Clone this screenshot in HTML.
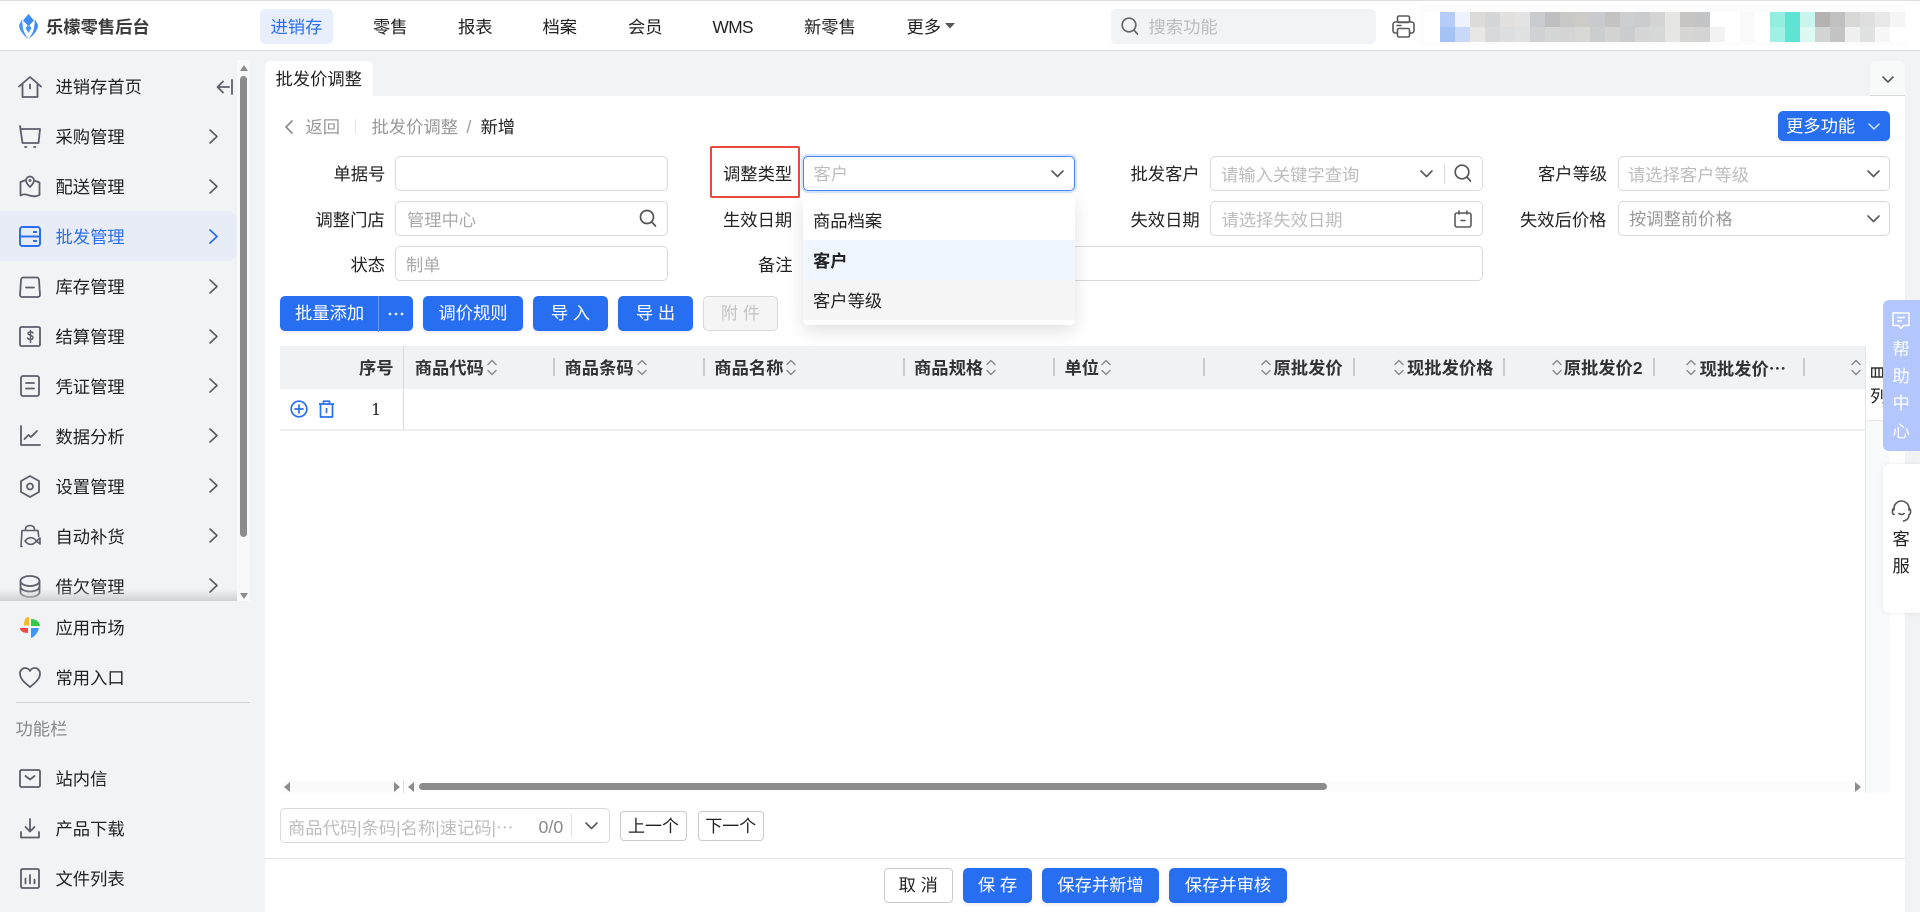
<!DOCTYPE html>
<html lang="zh-CN"><head><meta charset="utf-8"><title>批发价调整</title>
<style>
*{box-sizing:border-box}
html,body{margin:0;padding:0;width:1920px;height:912px;overflow:hidden;background:#f2f3f5}
body{position:relative;font-family:"Liberation Sans","Noto Sans CJK SC",sans-serif;font-size:17.3px;color:#222}
.a{position:absolute}
.t{position:absolute;white-space:nowrap;line-height:24px;font-size:17.3px;color:#222}
.g{color:#bdbdbd}.m{color:#999}.b{font-weight:700}.w{color:#fff}.bl{color:#2a6ff0}
.e{font-family:"Noto Sans CJK SC",sans-serif}
.i{position:absolute;border:1px solid #d9d9d9;border-radius:5px;height:35px;background:#fff}
.btn{position:absolute;background:#276ef1;border-radius:5px;color:#fff;text-align:center;height:35px;line-height:34px;font-size:17.3px;box-shadow:0 2px 3px rgba(0,0,0,.08);white-space:nowrap}
svg{position:absolute;overflow:visible;fill:none}
.s{stroke:#5c5e6a;stroke-width:1.8;stroke-linecap:round;stroke-linejoin:round}
.c{stroke:#5a5a5a;stroke-width:1.6;stroke-linecap:round;stroke-linejoin:round}
.sort{stroke:#8c8c8c;stroke-width:1.5;stroke-linecap:round;stroke-linejoin:round}
.dv{position:absolute;top:358px;width:1.5px;height:18px;background:#c9cbcf}
.mo{position:absolute;display:flex;height:15px}
.mo i{display:block;width:15px;height:15px}
</style></head><body>

<!-- header -->
<div class="a" style="left:0;top:0;width:1920px;height:51px;background:#fff;border-top:1px solid #e0e0e0;border-bottom:1.5px solid #dcdcdc"></div>
<svg style="left:19px;top:14px" width="19" height="25" viewBox="0 0 19 25"><path d="M9.500 0 15 6.500 9.500 12.500 4 6.500Z" fill="#3f8cf5"/><path d="M3 5.500 0 11c0 5 4 10 9.500 14-3-4-5-7.500-5.500-11z" fill="#4a96f7"/><path d="M16 5.500 19 11c0 5-4 10-9.500 14 3-4 5-7.500 5.500-11z" fill="#3f8cf5"/><path d="M9.500 12.500 13 8.500 15 11.500 9.500 20 4 11.500 6 8.500Z" fill="#fff"/><path d="M9.500 10.500 12.500 14 9.500 19 6.500 14Z" fill="#4a96f7"/></svg>
<div class="t b" style="left:46px;top:15px;color:#3a3a3a">乐檬零售后台</div>
<div class="a" style="left:260px;top:9px;width:73px;height:35px;background:#e8eefc;border-radius:5px"></div>
<div class="t bl" style="left:270.500px;top:15px">进销存</div>
<div class="t" style="left:373px;top:15px">零售</div>
<div class="t" style="left:458px;top:15px">报表</div>
<div class="t" style="left:542.500px;top:15px">档案</div>
<div class="t" style="left:628px;top:15px">会员</div>
<div class="t" style="left:712.500px;top:15px;letter-spacing:-.6px">WMS</div>
<div class="t" style="left:804px;top:15px">新零售</div>
<div class="t" style="left:906.500px;top:15px">更多</div>
<svg style="left:945px;top:23px" width="10" height="6"><path d="M0 0H10L5 5.500Z" fill="#555"/></svg>
<div class="a" style="left:1110.500px;top:9px;width:265.500px;height:35px;background:#f2f3f5;border-radius:5px"></div>
<svg style="left:1121px;top:17px" width="18" height="19" viewBox="0 0 18 19"><circle cx="8" cy="8" r="6.800" stroke="#666" stroke-width="1.700"/><path d="M13 13.200 16.500 17" stroke="#666" stroke-width="1.700" stroke-linecap="round"/></svg>
<div class="t" style="left:1148.500px;top:15px;color:#bdbdbd">搜索功能</div>
<svg style="left:1392px;top:15px" width="23" height="23" viewBox="0 0 23 23" class="c"><rect x="5.500" y="1" width="12" height="6.500" rx="1.500"/><rect x="1" y="7" width="21" height="11" rx="2.500"/><rect x="5.500" y="13.500" width="12" height="8.500" rx="1.500" fill="#fff"/><path d="M5 10.500h4"/></svg>
<div class="a" style="left:1419px;top:5px;width:487px;height:40px;background:#fcfcfc"></div>
<div class="a" style="left:1425px;top:12px;width:475px;height:30px;background:#fff"></div>
<div class="mo" style="left:1440px;top:12px"><i style="background:#b5ccf8"></i><i style="background:#eef3fd"></i><i style="background:#dcdbd9"></i><i style="background:#d5d6d8"></i><i style="background:#e2e1e0"></i><i style="background:#e4e3e3"></i><i style="background:#cacbce"></i><i style="background:#bfbfc1"></i><i style="background:#c9c9c8"></i><i style="background:#cccbc8"></i><i style="background:#c9cacd"></i><i style="background:#c4c3c1"></i><i style="background:#cdced0"></i><i style="background:#cbccce"></i><i style="background:#d3d4d3"></i><i style="background:#e6e6e4"></i><i style="background:#c6c5c2"></i><i style="background:#c2c4c6"></i><i style="background:#fff"></i><i style="background:#fff"></i><i style="background:#fafafa"></i><i style="background:#fff"></i><i style="background:#93eee0"></i><i style="background:#5fe3d3"></i><i style="background:#c9f5ee"></i><i style="background:#b5b3b1"></i><i style="background:#c0c0c1"></i><i style="background:#d8d8d6"></i><i style="background:#dfdfe0"></i><i style="background:#e8e8e8"></i><i style="background:#f5f5f5"></i></div>
<div class="mo" style="left:1440px;top:27px"><i style="background:#a4c2f4"></i><i style="background:#c8d9f8"></i><i style="background:#e8e7e5"></i><i style="background:#d8d9da"></i><i style="background:#dddee0"></i><i style="background:#e0e1e1"></i><i style="background:#d0d1d3"></i><i style="background:#d5d6d6"></i><i style="background:#d3d4d3"></i><i style="background:#d8d8d6"></i><i style="background:#cccdce"></i><i style="background:#d3d3d1"></i><i style="background:#cbcccd"></i><i style="background:#d6d6d7"></i><i style="background:#d6d7d7"></i><i style="background:#e6e6e5"></i><i style="background:#d6d6d3"></i><i style="background:#d3d4d3"></i><i style="background:#f2f2f2"></i><i style="background:#fff"></i><i style="background:#fafafa"></i><i style="background:#fff"></i><i style="background:#a0f0e4"></i><i style="background:#5fe4d4"></i><i style="background:#dcf9f4"></i><i style="background:#d2d3d3"></i><i style="background:#c4c4c5"></i><i style="background:#f0f0f1"></i><i style="background:#e0e1e1"></i><i style="background:#f7f7f7"></i><i style="background:#fff"></i></div>

<!-- sidebar -->
<div class="a" style="left:237px;top:60px;width:13px;height:541px;background:#f9f9fa"></div>
<div class="a" style="left:240px;top:76px;width:7px;height:461px;background:#8c8c8c;border-radius:4px"></div>
<svg style="left:240px;top:65px" width="8" height="6"><path d="M4 0 8 6H0Z" fill="#8c8c8c"/></svg>
<svg style="left:240px;top:593px" width="8" height="6"><path d="M4 6 8 0H0Z" fill="#8c8c8c"/></svg>
<div class="a" style="left:0;top:211px;width:237px;height:50px;background:#e8ecf6;border-radius:0 9px 9px 0"></div>

<svg style="left:18px;top:76px" width="24" height="22" viewBox="0 0 24 22" class="s"><path d="M1 10.500 12 1l11 9.500M4.500 8V21h15V8M12 8.500v4"/></svg>
<div class="t" style="left:55.500px;top:75px">进销存首页</div>
<svg style="left:216px;top:79px" width="17" height="16" viewBox="0 0 17 16" class="s"><path d="M16 1v14M13 8H2M7 2.500 1.500 8 7 13.500"/></svg>

<svg style="left:19px;top:125px" width="22" height="23" viewBox="0 0 22 23" class="s"><path d="M1 1 3.500 18H19.500L21 4H2"/><path d="M6 22h1.500M15 22h1.500"/></svg>
<div class="t" style="left:55.500px;top:124.500px">采购管理</div>

<svg style="left:19px;top:175px" width="22" height="22" viewBox="0 0 22 22" class="s"><path d="M7 5 1.500 7v13.500c3-2 6-1 9 0s7 1 10-.5V7.500l-4-1.500"/><path d="M11 12c-2.500-2.500-4-4.500-4-6.500a4 4 0 0 1 8 0c0 2-1.500 4-4 6.500Z"/><circle cx="11" cy="5.500" r=".6"/></svg>
<div class="t" style="left:55.500px;top:174.500px">配送管理</div>

<svg style="left:19px;top:226px" width="22" height="21" viewBox="0 0 22 21"><rect x="1" y="1" width="20" height="19" rx="2.500" stroke="#2a6ff0" stroke-width="2"/><path d="M1 10.500h20M14 6h4M14 15h4" stroke="#2a6ff0" stroke-width="2"/></svg>
<div class="t bl" style="left:55.500px;top:224.500px">批发管理</div>

<svg style="left:19px;top:276px" width="22" height="22" viewBox="0 0 22 22" class="s"><path d="M4 1.500h14c1 0 2 1 2 2.500l1 15c0 1-1 2-2 2H3c-1 0-2-1-2-2L2 4c0-1.500 1-2.500 2-2.500ZM7 11.500h8"/></svg>
<div class="t" style="left:55.500px;top:274.500px">库存管理</div>

<svg style="left:19px;top:326px" width="22" height="21" viewBox="0 0 22 21" class="s"><rect x="1" y="1" width="20" height="19" rx="1.500"/><path d="M14 7c-1-1.500-5-1.500-5 .5s5 1.500 5 4-4.500 2.500-5.500.5M11.500 4.500v12" stroke-width="1.500"/></svg>
<div class="t" style="left:55.500px;top:324.500px">结算管理</div>

<svg style="left:20px;top:375px" width="20" height="22" viewBox="0 0 20 22" class="s"><rect x="1" y="1" width="18" height="20" rx="2"/><path d="M6 8h8M6 13.500h8"/></svg>
<div class="t" style="left:55.500px;top:374.500px">凭证管理</div>

<svg style="left:20px;top:425px" width="20" height="21" viewBox="0 0 20 21" class="s"><path d="M1 1v19h19M4.500 14l4-4 2.500 2 6-6"/></svg>
<div class="t" style="left:55.500px;top:424.500px">数据分析</div>

<svg style="left:20px;top:475px" width="20" height="23" viewBox="0 0 20 23" class="s"><path d="M10 1 19 6v11l-9 5-9-5V6Z"/><circle cx="10" cy="11.500" r="3"/></svg>
<div class="t" style="left:55.500px;top:474.500px">设置管理</div>

<svg style="left:19px;top:525px" width="22" height="22" viewBox="0 0 22 22" class="s"><path d="M6.500 5.500V4a4.500 3.500 0 0 1 9 0v1.500M3 21.500H2L3 5.500h16l.7 6M6 16c3.500-4.500 8-4.500 11.500 0-3.500 4.500-8 4.500-11.500 0ZM17.500 16l3.500-3v6Z" stroke-width="1.600"/></svg>
<div class="t" style="left:55.500px;top:524.500px">自动补货</div>

<svg style="left:19px;top:575px" width="22" height="23" viewBox="0 0 22 23" class="s"><ellipse cx="11" cy="6" rx="9.500" ry="5"/><path d="M1.500 6v11c0 2.800 4.300 5 9.500 5s9.500-2.200 9.500-5V6M1.500 11.500c0 2.800 4.300 5 9.500 5s9.500-2.200 9.500-5"/></svg>
<div class="t" style="left:55.500px;top:574.500px">借欠管理</div>

<div class="a" style="left:0;top:589px;width:237px;height:12px;background:linear-gradient(to bottom,rgba(205,205,205,0),rgba(205,205,205,.9))"></div>

<svg style="left:19px;top:616px" width="22" height="22" viewBox="0 0 22 22"><path d="M10 1C6.500 1 5 4 5 9.500h5Z" fill="#f8b62a"/><path d="M12 3v7h9c0-4-4-7-9-7Z" fill="#35c94a"/><path d="M1 12c0 3 3 5 8 5v-5Z" fill="#f04a45"/><path d="M12 12v10c4-1 7-6 8-10Z" fill="#3e96f7"/></svg>
<div class="t" style="left:55.500px;top:616px">应用市场</div>

<svg style="left:19px;top:667px" width="22" height="21" viewBox="0 0 22 21" class="s"><path d="M11 20C4 14.500 1 11 1 6.500 1 3.500 3.300 1 6 1c2 0 4 1 5 3 1-2 3-3 5-3 2.700 0 5 2.500 5 5.500C21 11 18 14.500 11 20Z"/></svg>
<div class="t" style="left:55.500px;top:665.500px">常用入口</div>

<div class="a" style="left:15.500px;top:702px;width:234.500px;height:1px;background:#d4d5d8"></div>
<div class="t" style="left:15.500px;top:717px;color:#888">功能栏</div>

<svg style="left:19px;top:769px" width="22" height="19" viewBox="0 0 22 19" class="s"><rect x="1" y="1" width="20" height="17" rx="1.500"/><path d="M6.500 7l4.500 3.500L15.500 7"/></svg>
<div class="t" style="left:55.500px;top:767px">站内信</div>

<svg style="left:20px;top:818px" width="20" height="21" viewBox="0 0 20 21" class="s"><path d="M10 1v12M5.500 9l4.500 4.500L14.500 9M1 14v5.500h18V14"/></svg>
<div class="t" style="left:55.500px;top:817px">产品下载</div>

<svg style="left:20px;top:868px" width="20" height="21" viewBox="0 0 20 21" class="s"><rect x="1" y="1" width="18" height="19" rx="1.500"/><path d="M5.500 10.500v5M10 7v8.500M14.500 11.500v4"/></svg>
<div class="t" style="left:55.500px;top:866.500px">文件列表</div>

<!-- chevrons sidebar -->
<svg style="left:209px;top:129px" width="9" height="15" class="c" viewBox="0 0 9 15"><path d="M1 1l7 6.500L1 14"/></svg>
<svg style="left:209px;top:179px" width="9" height="15" class="c" viewBox="0 0 9 15"><path d="M1 1l7 6.500L1 14"/></svg>
<svg style="left:209px;top:229px" width="9" height="15" viewBox="0 0 9 15"><path d="M1 1l7 6.500L1 14" stroke="#2a6ff0" stroke-width="1.800" stroke-linecap="round" stroke-linejoin="round"/></svg>
<svg style="left:209px;top:279px" width="9" height="15" class="c" viewBox="0 0 9 15"><path d="M1 1l7 6.500L1 14"/></svg>
<svg style="left:209px;top:329px" width="9" height="15" class="c" viewBox="0 0 9 15"><path d="M1 1l7 6.500L1 14"/></svg>
<svg style="left:209px;top:378px" width="9" height="15" class="c" viewBox="0 0 9 15"><path d="M1 1l7 6.500L1 14"/></svg>
<svg style="left:209px;top:428px" width="9" height="15" class="c" viewBox="0 0 9 15"><path d="M1 1l7 6.500L1 14"/></svg>
<svg style="left:209px;top:478px" width="9" height="15" class="c" viewBox="0 0 9 15"><path d="M1 1l7 6.500L1 14"/></svg>
<svg style="left:209px;top:528px" width="9" height="15" class="c" viewBox="0 0 9 15"><path d="M1 1l7 6.500L1 14"/></svg>
<svg style="left:209px;top:578px" width="9" height="15" class="c" viewBox="0 0 9 15"><path d="M1 1l7 6.500L1 14"/></svg>

<!-- main -->
<div class="a" style="left:265px;top:61px;width:108px;height:36px;background:#fff;border-radius:6px 6px 0 0"></div>
<div class="t" style="left:275.500px;top:67px">批发价调整</div>
<div class="a" style="left:1870px;top:61px;width:35px;height:35px;background:#f8f9f9;border-radius:6px 6px 0 0;border-bottom:1.500px solid #d9d9d9"></div>
<svg style="left:1882px;top:76px" width="12" height="7" class="c"><path d="M1 1l5 5 5-5"/></svg>
<div class="a" style="left:265px;top:96px;width:1640px;height:816px;background:#fff"></div>

<svg style="left:285px;top:120px" width="8" height="14" viewBox="0 0 8 14" class="c"><path d="M7 1 1 7l6 6" stroke="#888"/></svg>
<div class="t m" style="left:305.500px;top:115px">返回</div>
<div class="a" style="left:355px;top:119px;width:1px;height:15px;background:#e5e5e5"></div>
<div class="t m" style="left:371.500px;top:115px">批发价调整</div>
<div class="t m" style="left:466.500px;top:115px">/</div>
<div class="t" style="left:480.500px;top:115px">新增</div>
<div class="btn" style="left:1778px;top:111px;width:112px;height:30px;line-height:30px;text-align:left;padding-left:8px">更多功能</div>
<svg style="left:1868px;top:123px" width="12" height="7" viewBox="0 0 12 7"><path d="M1 1l5 5 5-5" stroke="#cfe0ff" stroke-width="1.500" stroke-linecap="round" stroke-linejoin="round"/></svg>

<!-- form -->
<div class="t" style="left:333.500px;top:162px">单据号</div>
<div class="i" style="left:395px;top:156px;width:273px"></div>
<div class="t" style="left:315.500px;top:207.500px">调整门店</div>
<div class="i" style="left:395px;top:201px;width:273px"></div>
<div class="t" style="left:407px;top:207.500px;color:#aaa">管理中心</div>
<svg style="left:639px;top:209px" width="18" height="19" viewBox="0 0 18 19"><circle cx="8" cy="8" r="6.500" stroke="#555" stroke-width="1.700"/><path d="M12.800 13 16.500 17" stroke="#555" stroke-width="1.700" stroke-linecap="round"/></svg>
<div class="t" style="left:350.500px;top:252.500px">状态</div>
<div class="i" style="left:395px;top:246px;width:273px"></div>
<div class="t" style="left:406px;top:252.500px;color:#aaa">制单</div>

<div class="a" style="left:710px;top:146px;width:90px;height:52px;border:2.500px solid #e8483e;border-radius:2px"></div>
<div class="t" style="left:723px;top:162px">调整类型</div>
<div class="i" style="left:803px;top:156px;width:272px;border-color:#4a86f0;box-shadow:0 0 0 2px #d7e5fd"></div>
<div class="t g" style="left:813.500px;top:162px">客户</div>
<svg style="left:1051px;top:170px" width="13" height="8" class="c"><path d="M1 1l5.500 5.500L12 1"/></svg>
<div class="t" style="left:723px;top:207.500px">生效日期</div>
<div class="t" style="left:758px;top:252.500px">备注</div>
<div class="i" style="left:803px;top:246px;width:679.500px"></div>

<div class="t" style="left:1130.500px;top:162px">批发客户</div>
<div class="i" style="left:1210px;top:156px;width:272.500px"></div>
<div class="t g" style="left:1221px;top:163px">请输入关键字查询</div>
<svg style="left:1419.500px;top:170px" width="13" height="8" class="c"><path d="M1 1l5.500 5.500L12 1"/></svg>
<div class="a" style="left:1443.500px;top:164px;width:1px;height:20px;background:#d9d9d9"></div>
<svg style="left:1453.500px;top:164px" width="18" height="19" viewBox="0 0 18 19"><circle cx="8" cy="8" r="6.800" stroke="#555" stroke-width="1.700"/><path d="M13 13.200 16.500 17" stroke="#555" stroke-width="1.700" stroke-linecap="round"/></svg>
<div class="t" style="left:1130.500px;top:207.500px">失效日期</div>
<div class="i" style="left:1210px;top:201px;width:272.500px"></div>
<div class="t g" style="left:1221.500px;top:207.500px">请选择失效日期</div>
<svg style="left:1454px;top:210px" width="18" height="18" viewBox="0 0 18 18" class="c"><rect x="1" y="3" width="16" height="14" rx="2"/><path d="M5 1v3M13 1v3M7 10.500h4"/></svg>

<div class="t" style="left:1538px;top:162px">客户等级</div>
<div class="i" style="left:1618px;top:156px;width:272px"></div>
<div class="t g" style="left:1628px;top:163px">请选择客户等级</div>
<svg style="left:1866.500px;top:170px" width="13" height="8" class="c"><path d="M1 1l5.500 5.500L12 1"/></svg>
<div class="t" style="left:1520px;top:207.500px">失效后价格</div>
<div class="i" style="left:1618px;top:201px;width:272px"></div>
<div class="t m" style="left:1629px;top:207px">按调整前价格</div>
<svg style="left:1866.500px;top:215px" width="13" height="8" class="c"><path d="M1 1l5.500 5.500L12 1"/></svg>

<!-- buttons -->
<div class="btn" style="left:280px;top:296px;width:133px;text-align:left;padding-left:15px">批量添加</div>
<div class="a" style="left:378px;top:296px;width:1px;height:36px;background:#6a9af5"></div>
<svg style="left:388px;top:312px" width="16" height="4"><circle cx="2" cy="2" r="1.400" fill="#e4ecfd"/><circle cx="8" cy="2" r="1.400" fill="#e4ecfd"/><circle cx="14" cy="2" r="1.400" fill="#e4ecfd"/></svg>
<div class="btn" style="left:423px;top:296px;width:100px">调价规则</div>
<div class="btn" style="left:533px;top:296px;width:75px">导 入</div>
<div class="btn" style="left:618px;top:296px;width:75px">导 出</div>
<div class="a" style="left:703px;top:296px;width:75px;height:35px;background:#f5f5f5;border:1px solid #d9d9d9;border-radius:5px;color:#c4c4c4;text-align:center;line-height:33px;font-size:17.300px">附 件</div>

<!-- table -->
<div class="a" style="left:280px;top:346px;width:1584.500px;height:43px;background:#f1f2f4"></div>
<div class="a" style="left:280px;top:429px;width:1584.500px;height:1.500px;background:#efefef"></div>
<div class="a" style="left:403px;top:346px;width:1px;height:83px;background:#d9dadd"></div>
<div class="t b" style="left:359px;top:355.500px;color:#333">序号</div>
<div class="t b" style="left:414.700px;top:355.500px;color:#333">商品代码</div>
<div class="t b" style="left:564.500px;top:355.500px;color:#333">商品条码</div>
<div class="t b" style="left:714.300px;top:355.500px;color:#333">商品名称</div>
<div class="t b" style="left:914px;top:355.500px;color:#333">商品规格</div>
<div class="t b" style="left:1064.500px;top:355.500px;color:#333">单位</div>
<div class="t b" style="left:1273.500px;top:355.500px;color:#333">原批发价</div>
<div class="t b" style="left:1407px;top:355.500px;color:#333">现批发价格</div>
<div class="t b" style="left:1563.700px;top:355.500px;color:#333">原批发价2</div>
<div class="t b" style="left:1699.600px;top:355.500px;color:#333">现批发价<span class="e">…</span></div>
<div class="dv" style="left:553px"></div><div class="dv" style="left:703px"></div><div class="dv" style="left:903px"></div><div class="dv" style="left:1053px"></div><div class="dv" style="left:1203px"></div><div class="dv" style="left:1353px"></div><div class="dv" style="left:1503px"></div><div class="dv" style="left:1653px"></div><div class="dv" style="left:1803px"></div>
<svg style="left:486.500px;top:359px" width="10" height="17" viewBox="0 0 10 17" class="sort"><path d="M1 5.500 5 1.500l4 4M1 11.500l4 4 4-4"/></svg>
<svg style="left:636.500px;top:359px" width="10" height="17" viewBox="0 0 10 17" class="sort"><path d="M1 5.500 5 1.500l4 4M1 11.500l4 4 4-4"/></svg>
<svg style="left:786px;top:359px" width="10" height="17" viewBox="0 0 10 17" class="sort"><path d="M1 5.500 5 1.500l4 4M1 11.500l4 4 4-4"/></svg>
<svg style="left:986px;top:359px" width="10" height="17" viewBox="0 0 10 17" class="sort"><path d="M1 5.500 5 1.500l4 4M1 11.500l4 4 4-4"/></svg>
<svg style="left:1101px;top:359px" width="10" height="17" viewBox="0 0 10 17" class="sort"><path d="M1 5.500 5 1.500l4 4M1 11.500l4 4 4-4"/></svg>
<svg style="left:1261px;top:359px" width="10" height="17" viewBox="0 0 10 17" class="sort"><path d="M1 5.500 5 1.500l4 4M1 11.500l4 4 4-4"/></svg>
<svg style="left:1394px;top:359px" width="10" height="17" viewBox="0 0 10 17" class="sort"><path d="M1 5.500 5 1.500l4 4M1 11.500l4 4 4-4"/></svg>
<svg style="left:1551.500px;top:359px" width="10" height="17" viewBox="0 0 10 17" class="sort"><path d="M1 5.500 5 1.500l4 4M1 11.500l4 4 4-4"/></svg>
<svg style="left:1686px;top:359px" width="10" height="17" viewBox="0 0 10 17" class="sort"><path d="M1 5.500 5 1.500l4 4M1 11.500l4 4 4-4"/></svg>
<svg style="left:1851px;top:359px" width="10" height="17" viewBox="0 0 10 17" class="sort"><path d="M1 5.500 5 1.500l4 4M1 11.500l4 4 4-4"/></svg>

<svg style="left:290px;top:400px" width="18" height="18" viewBox="0 0 18 18"><circle cx="9" cy="9" r="7.800" stroke="#2a6ff0" stroke-width="1.700"/><path d="M9 5v8M5 9h8" stroke="#2a6ff0" stroke-width="1.700" stroke-linecap="round"/></svg>
<svg style="left:317.500px;top:400px" width="17" height="18" viewBox="0 0 17 18"><path d="M1 4h15M5.500 4V1.200h6V4M2.500 4v13h12V4M8.500 8v5" stroke="#2a6ff0" stroke-width="1.700" stroke-linejoin="round"/></svg>
<div class="t" style="left:371px;top:398px;font-family:'DejaVu Serif',serif;font-size:16px">1</div>

<!-- right fixed col -->
<div class="a" style="left:1864.500px;top:346px;width:1px;height:447px;background:#e4e5e7"></div>
<div class="a" style="left:1865.500px;top:420px;width:24.500px;height:373px;background:#f9fafc"></div>
<div class="a" style="left:1865px;top:420px;width:20px;height:1px;background:#e4e5e7"></div>
<svg style="left:1871px;top:367px" width="12" height="11" viewBox="0 0 12 11"><path d="M.700 1h11v9h-11zM4.400 1v9M8 1v9" stroke="#333" stroke-width="1.400"/></svg>
<div class="t" style="left:1870px;top:384px">列</div>

<!-- scrollbars -->
<div class="a" style="left:283px;top:781px;width:115px;height:12px;background:#fafafa"></div>
<div class="a" style="left:403px;top:781px;width:1461px;height:12px;background:#fcfcfc"></div>
<div class="a" style="left:403px;top:781px;width:1px;height:12px;background:#dcdcdc"></div>
<svg style="left:284px;top:782px" width="6" height="10"><path d="M6 0V10L0 5Z" fill="#8c8c8c"/></svg>
<svg style="left:394px;top:782px" width="6" height="10"><path d="M0 0V10L6 5Z" fill="#8c8c8c"/></svg>
<svg style="left:408px;top:782px" width="6" height="10"><path d="M6 0V10L0 5Z" fill="#8c8c8c"/></svg>
<svg style="left:1855px;top:782px" width="6" height="10"><path d="M0 0V10L6 5Z" fill="#8c8c8c"/></svg>
<div class="a" style="left:419px;top:783px;width:908px;height:7px;background:#8c8c8c;border-radius:4px"></div>

<!-- locator -->
<div class="i" style="left:280px;top:808px;width:330px"></div>
<div class="t g" style="left:288px;top:815px">商品代码|条码|名称|速记码|<span class="e">…</span></div>
<div class="t" style="left:538.500px;top:815px;color:#888;font-size:17.800px">0/0</div>
<div class="a" style="left:571px;top:814px;width:1px;height:23px;background:#e2e2e2"></div>
<svg style="left:585px;top:822px" width="13" height="8" class="c"><path d="M1 1l5.500 5.500L12 1"/></svg>
<div class="a" style="left:620px;top:811px;width:67px;height:30px;border:1px solid #ccc;border-radius:4px;text-align:center;line-height:29px;font-size:17px;color:#222;white-space:nowrap">上一个</div>
<div class="a" style="left:697.500px;top:811px;width:66.500px;height:30px;border:1px solid #ccc;border-radius:4px;text-align:center;line-height:29px;font-size:17px;color:#222;white-space:nowrap">下一个</div>

<!-- footer -->
<div class="a" style="left:265px;top:858px;width:1640px;height:1px;background:#e2e2e2"></div>
<div class="a" style="left:884px;top:868px;width:68.500px;height:35px;border:1px solid #ccc;border-radius:4px;text-align:center;line-height:33px;color:#222">取 消</div>
<div class="btn" style="left:963px;top:868px;width:69px">保 存</div>
<div class="btn" style="left:1042px;top:868px;width:117px">保存并新增</div>
<div class="btn" style="left:1169px;top:868px;width:118px">保存并审核</div>

<!-- dropdown -->
<div class="a" style="left:803px;top:195px;width:272px;height:130px;background:#fff;border-radius:5px;box-shadow:0 6px 18px rgba(0,0,0,.12)"></div>
<div class="a" style="left:803px;top:240px;width:272px;height:40px;background:#eff6fd"></div>
<div class="a" style="left:803px;top:280px;width:272px;height:40px;background:#f5f5f5"></div>
<div class="t" style="left:813px;top:209px">商品档案</div>
<div class="t b" style="left:813px;top:249px">客户</div>
<div class="t" style="left:813px;top:289px">客户等级</div>

<!-- help -->
<div class="a" style="left:1883px;top:300px;width:37px;height:151px;background:#b3c6fd;border-radius:6px 0 0 6px"></div>
<svg style="left:1892px;top:312px" width="18" height="18" viewBox="0 0 18 18"><path d="M1 1h16v12.500H11.500L9 16.500 6.500 13.500H1ZM5 5.500h8M5 9h5" stroke="#fff" stroke-width="1.500" stroke-linejoin="round"/></svg>
<div class="t w" style="left:1892.500px;top:337px">帮</div>
<div class="t w" style="left:1892.500px;top:364px">助</div>
<div class="t w" style="left:1892.500px;top:391px">中</div>
<div class="t w" style="left:1892.500px;top:419px">心</div>
<div class="a" style="left:1883px;top:464px;width:37px;height:149px;background:#fff;border-radius:6px 0 0 6px;box-shadow:0 0 6px rgba(0,0,0,.08)"></div>
<svg style="left:1891px;top:500px" width="21" height="22" viewBox="0 0 21 22"><path d="M3 10V8.500a7.500 7.500 0 0 1 15 0V10M3 8.500c-2 0-2.200 6 0 6M18 8.500c2 0 2.200 6 0 6M18 14.500c0 3.500-2 6-5.500 6.500M8 13.500c1 1.300 4 1.300 5 0" stroke="#555" stroke-width="1.600" stroke-linecap="round"/></svg>
<div class="t" style="left:1892.500px;top:527px">客</div>
<div class="t" style="left:1892.500px;top:554px">服</div>
</body></html>
